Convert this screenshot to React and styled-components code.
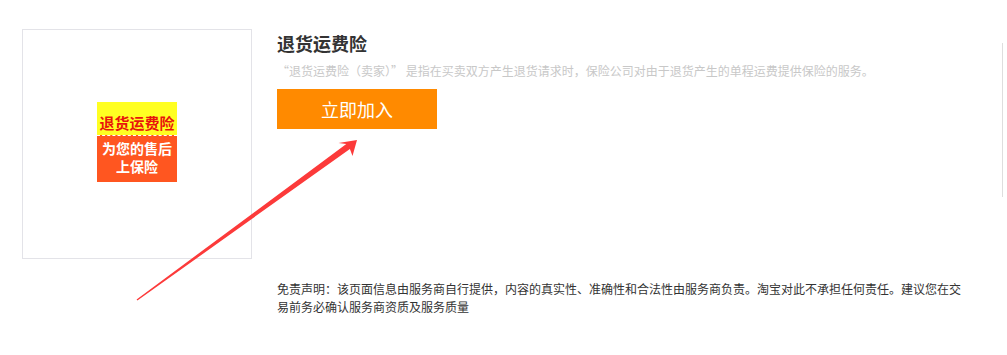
import React from "react";
import styled, { createGlobalStyle } from "styled-components";

const Global = createGlobalStyle`
  html, body { margin: 0; padding: 0; background: #fff; }
  body { font-family: "Microsoft YaHei", "Noto Sans CJK SC", "Noto Sans", sans-serif; }
  * { box-sizing: border-box; }
`;

const Page = styled.div`
  position: relative;
  width: 1007px;
  height: 355px;
  padding: 29px 0 0 22px;
  overflow: hidden;
`;

const Row = styled.div`
  display: flex;
  align-items: flex-start;
`;

const ImageBox = styled.div`
  width: 230px;
  height: 230px;
  border: 1px solid #e3e3e8;
  display: flex;
  align-items: center;
  justify-content: center;
  padding-bottom: 4px;
  flex-shrink: 0;
`;

const Badge = styled.div`
  width: 80px;
  height: 80px;
  display: flex;
  flex-direction: column;
  font-weight: bold;
  text-align: center;
`;

const BadgeTop = styled.div`
  height: 33px;
  background: #ffff22;
  color: #e8140c;
  font-size: 15px;
  line-height: 18px;
  padding-top: 12px;
  white-space: nowrap;
`;

const BadgeBottom = styled.div`
  flex: 1;
  background: #ff5620;
  border-top: 1px dashed #fff;
  color: #fff;
  font-size: 14px;
  line-height: 18px;
  padding-top: 3px;
`;

const Info = styled.div`
  margin-left: 25px;
  padding-top: 2px;
  width: 700px;
  flex-shrink: 0;
`;

const Title = styled.h2`
  margin: 0;
  font-size: 18px;
  line-height: 24px;
  font-weight: bold;
  color: #333;
`;

const Desc = styled.p`
  margin: 6px 0 0;
  font-size: 12px;
  line-height: 20px;
  color: #c8c8c8;
  white-space: nowrap;
`;

const JoinButton = styled.button`
  margin-top: 8px;
  width: 160px;
  height: 40px;
  border: none;
  background: #ff8a00;
  color: #fff;
  font-family: inherit;
  font-size: 18px;
  padding: 0;
  cursor: pointer;
`;

const Divider = styled.div`
  margin-left: 25px;
  margin-top: 14px;
  width: 1px;
  height: 154px;
  background: #dedede;
  flex-shrink: 0;
`;

const Disclaimer = styled.p`
  margin: 21px 0 0 255px;
  width: 690px;
  font-size: 12px;
  line-height: 18px;
  color: #333;
`;

const ArrowLayer = styled.svg`
  position: absolute;
  left: 0;
  top: 0;
  width: 1007px;
  height: 355px;
  pointer-events: none;
`;

export default function App() {
  return (
    <>
      <Global />
      <Page>
        <Row>
          <ImageBox>
            <Badge>
              <BadgeTop>退货运费险</BadgeTop>
              <BadgeBottom>
                为您的售后
                <br />
                上保险
              </BadgeBottom>
            </Badge>
          </ImageBox>
          <Info>
            <Title>退货运费险</Title>
            <Desc>
              “退货运费险（卖家）” 是指在买卖双方产生退货请求时，保险公司对由于退货产生的单程运费提供保险的服务。
            </Desc>
            <JoinButton>立即加入</JoinButton>
          </Info>
          <Divider />
        </Row>
        <Disclaimer>
          免责声明：该页面信息由服务商自行提供，内容的真实性、准确性和合法性由服务商负责。淘宝对此不承担任何责任。建议您在交易前务必确认服务商资质及服务质量
        </Disclaimer>
        <ArrowLayer viewBox="0 0 1007 355">
          <polygon
            points="357,140 352.5,156 349.9,148.9 137.4,300.6 136.6,299.4 346.3,144.1 338.5,143"
            fill="#fc3a3a"
          />
        </ArrowLayer>
      </Page>
    </>
  );
}
